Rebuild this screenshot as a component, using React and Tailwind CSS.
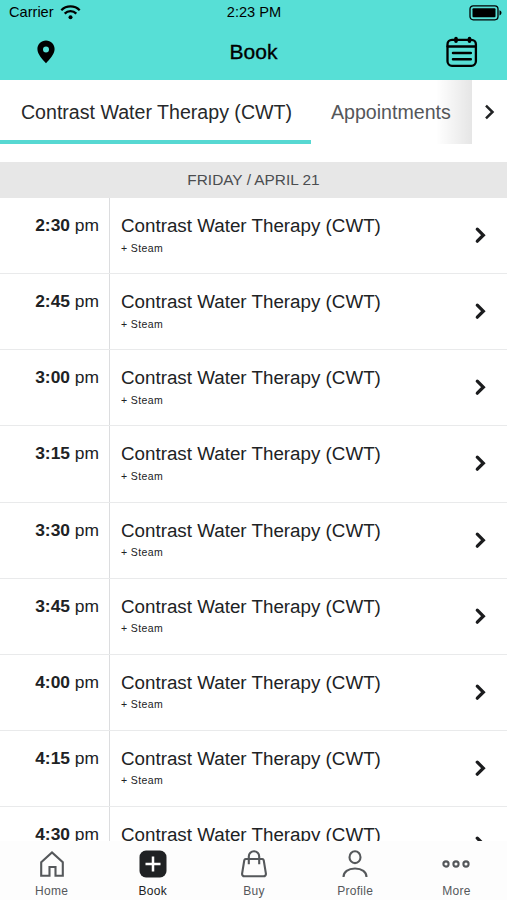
import React from 'react';

const times = ['2:30', '2:45', '3:00', '3:15', '3:30', '3:45', '4:00', '4:15', '4:30'];

const StatusBar = () => (
  <div className="flex h-6 items-center justify-between pl-[9px] pr-[5px] pt-px text-[14.6px]">
    <div className="flex flex-1 items-center gap-[6px]">
      <span>Carrier</span>
      <svg width="21" height="15" viewBox="0 0 21 15" fill="none" stroke="currentColor" strokeWidth="2.3">
        <path d="M1.3 5.2a13 13 0 0 1 18.4 0" />
        <path d="M4.7 8.6a8.2 8.2 0 0 1 11.6 0" />
        <circle cx="10.5" cy="12.2" r="2" fill="currentColor" stroke="none" />
      </svg>
    </div>
    <span className="-ml-[3px]">2:23 PM</span>
    <div className="flex flex-1 justify-end">
      <svg width="33" height="16" viewBox="0 0 33 16" fill="none">
        <rect x="1" y="0.8" width="28" height="14" rx="3.2" stroke="currentColor" strokeWidth="1.3" />
        <rect x="3.5" y="3.3" width="23" height="9" rx="1" fill="currentColor" />
        <path d="M30.5 5.2c1.4.4 2 1.4 2 2.6s-.6 2.2-2 2.6z" fill="currentColor" />
      </svg>
    </div>
  </div>
);

const Header = () => (
  <header className="h-20 shrink-0 bg-[#57dfd6] text-black">
    <StatusBar />
    <div className="flex h-14 items-center pl-[37px] pr-[29px]">
      <div className="flex-1">
        <svg width="18" height="24" viewBox="0 0 18 24">
          <path
            fillRule="evenodd"
            fill="currentColor"
            d="M9 .5C4.1.5.4 4.3.4 9c0 5.2 5.2 10.5 8.6 14.3 3.4-3.8 8.6-9.1 8.6-14.3C17.6 4.3 13.9.5 9 .5zm0 5.9a3 3 0 1 1 0 6 3 3 0 0 1 0-6z"
          />
        </svg>
      </div>
      <h1 className="-ml-2 text-[21px] [-webkit-text-stroke:0.35px_black]">Book</h1>
      <div className="flex flex-1 justify-end">
        <svg width="34" height="32" viewBox="0 0 34 32" fill="none" stroke="currentColor" strokeWidth="2.3" strokeLinecap="round">
          <rect x="3.5" y="3.8" width="28.4" height="26" rx="4.5" />
          <path d="M3.5 10.5h28.4" />
          <path d="M12 2.5v2.8M25.5 2.5v2.8" strokeWidth="3.6" />
          <path d="M9 17h17.8M9 23.2h17.8" strokeWidth="2.5" />
        </svg>
      </div>
    </div>
  </header>
);

const Tabs = () => (
  <nav className="flex h-16 shrink-0 bg-white text-[19.6px]">
    <div className="relative flex w-[472px] overflow-hidden whitespace-nowrap">
      <div className="flex w-[311px] shrink-0 items-center justify-center border-b-4 border-[#57d8d2] pl-[2px] pt-[5px] text-[#26282a]">
        Contrast Water Therapy (CWT)
      </div>
      <div className="flex items-center border-b-4 border-transparent pl-5 pt-[5px] text-[#55575a]">Appointments</div>
      <div className="absolute inset-y-0 right-0 w-9 bg-linear-to-r from-transparent to-black/10" />
    </div>
    <div className="flex flex-1 items-center justify-center">
      <svg width="12" height="18" viewBox="0 0 12 18" fill="none" stroke="#202224" strokeWidth="2.5">
        <path d="M2 2.6l6.5 6.4L2 15.4" />
      </svg>
    </div>
  </nav>
);

const Slot = ({ time }) => (
  <li className="flex h-[76.15px] shrink-0 border-b border-[#e9eaeb] text-[#202224]">
    <div className="w-[110px] shrink-0 border-r border-[#dcdddf] pr-[10px] pt-[15px] text-right text-[17.4px] leading-6">
      <b>{time}</b> pm
    </div>
    <div className="flex-1 pl-[11px] pt-[16px]">
      <p className="text-[18.8px] leading-6">Contrast Water Therapy (CWT)</p>
      <p className="mt-[1.5px] text-[10.5px] leading-4 tracking-[0.4px]">+ Steam</p>
    </div>
    <svg className="mr-5 mt-[27px]" width="13" height="20" viewBox="0 0 13 20" fill="none" stroke="#1b1c1e" strokeWidth="3.3" strokeLinecap="round">
      <path d="M3.3 4.2l6 6-6 6" />
    </svg>
  </li>
);

const navItems = [
  {
    label: 'Home',
    icon: <path d="M3.2 12.2L14 2.5l10.8 9.700v13.600h-7.300v-8.800h-6v8.800H3.200z" />,
  },
  {
    label: 'Book',
    active: true,
    icon: (
      <>
        <rect x="0.5" y="0.5" width="27" height="27" rx="6.5" fill="#202224" stroke="none" />
        <path d="M14 6.5v15M6.5 14h15" stroke="white" strokeWidth="2.5" />
      </>
    ),
  },
  {
    label: 'Buy',
    icon: (
      <>
        <path d="M5.8 9h16.4a1.5 1.5 0 0 1 1.5 1.2l2.2 13.4a2.4 2.4 0 0 1-2.3 2.7H4.4a2.4 2.4 0 0 1-2.3-2.7l2.2-13.4A1.5 1.5 0 0 1 5.8 9z" />
        <path d="M8.8 14.2V6.5a5.2 5.2 0 0 1 10.4 0v7.7" />
      </>
    ),
  },
  {
    label: 'Profile',
    icon: (
      <>
        <ellipse cx="14" cy="7.2" rx="5.5" ry="5.9" />
        <path d="M2.5 27c0-5 4.5-8.5 11.5-8.500S25.500 22 25.500 27" />
      </>
    ),
  },
  {
    label: 'More',
    icon: (
      <>
        <circle cx="4" cy="14" r="2.6" />
        <circle cx="14" cy="14" r="2.6" />
        <circle cx="24" cy="14" r="2.6" />
      </>
    ),
  },
];

const BottomNav = () => (
  <nav className="flex h-[59px] shrink-0 bg-[#fdfdfd] pl-px pt-[9px]">
    {navItems.map((item) => (
      <div
        key={item.label}
        className={`flex flex-1 flex-col items-center text-[12px] leading-4 tracking-[0.3px] ${item.active ? 'text-[#202224]' : 'text-[#55585b]'}`}
      >
        <svg width="28" height="28" viewBox="0 0 28 28" fill="none" stroke="currentColor" strokeWidth="2.1">
          {item.icon}
        </svg>
        <span className="mt-[5px]">{item.label}</span>
      </div>
    ))}
  </nav>
);

export default function App() {
  return (
    <div className="flex h-[900px] w-[507px] flex-col overflow-hidden bg-white font-['Liberation_Sans',Arial,sans-serif]">
      <Header />
      <Tabs />
      <h2 className="mt-[18px] flex h-9 shrink-0 items-center justify-center bg-[#e7e7e7] text-[15.4px] text-[#4b4d50]">
        FRIDAY / APRIL 21
      </h2>
      <ul className="flex min-h-0 flex-1 flex-col overflow-hidden">
        {times.map((time) => (
          <Slot key={time} time={time} />
        ))}
      </ul>
      <BottomNav />
    </div>
  );
}
